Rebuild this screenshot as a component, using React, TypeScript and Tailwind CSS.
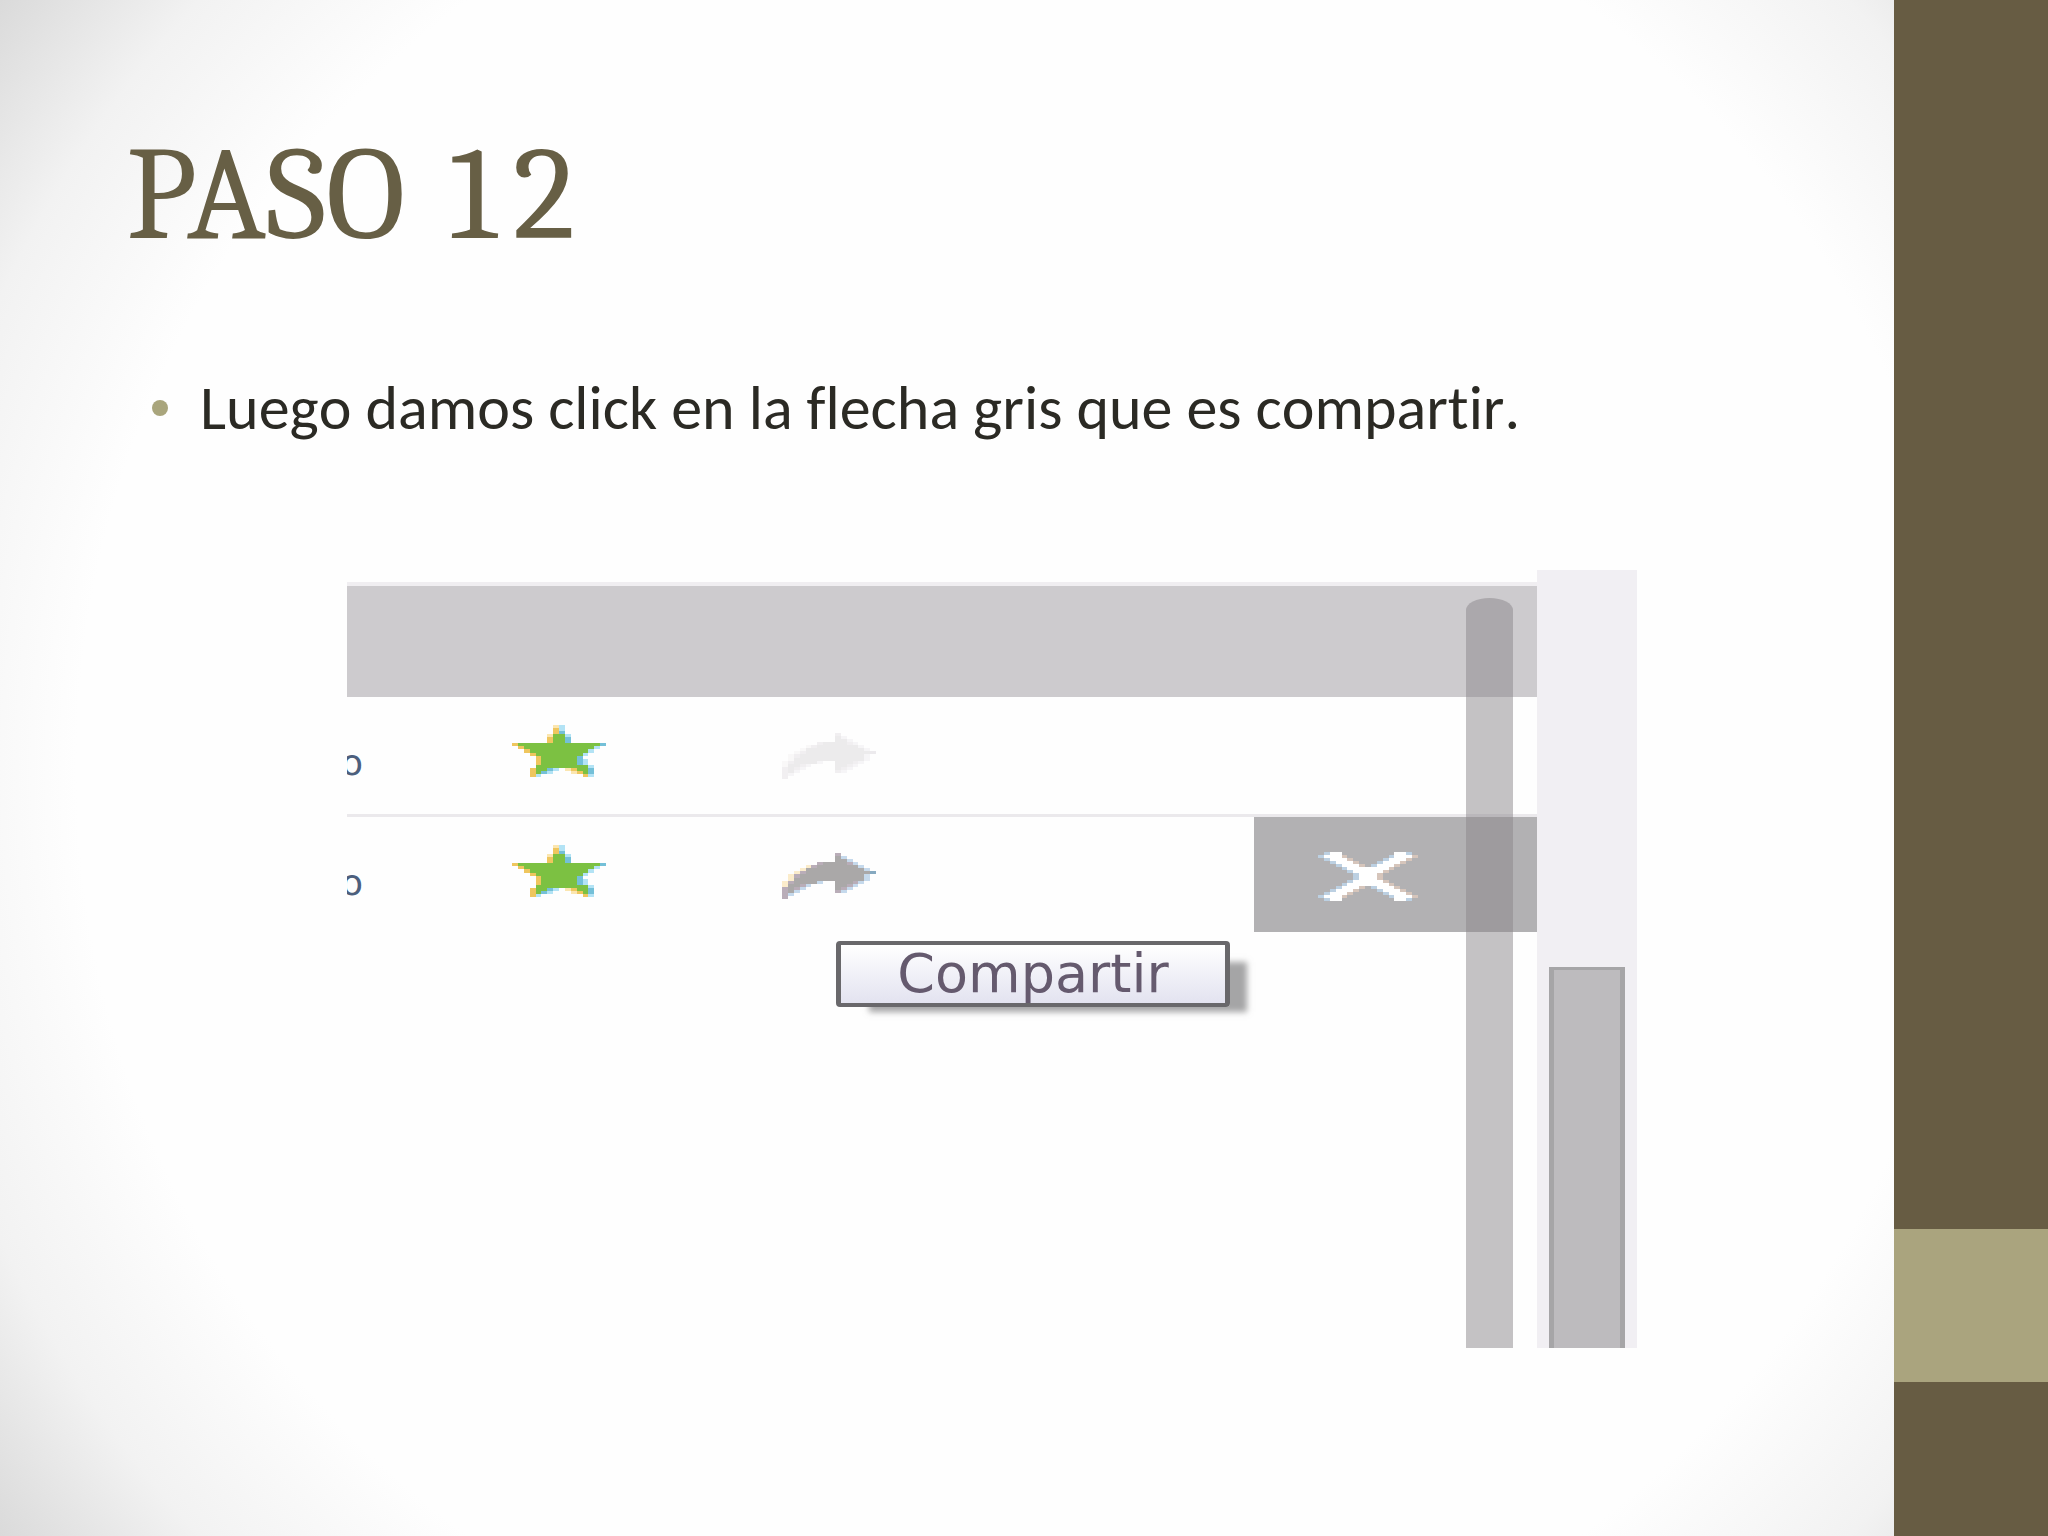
const STAR = [
  ".......ab.......",
  ".......yb.......",
  ".......yc.......",
  "......aggb......",
  "......yggc......",
  "......yggc......",
  "yggggggggggggggc",
  ".yggggggggggggb.",
  "..yggggggggggb..",
  "...yggggggggb...",
  "....yggggggc....",
  "....yggggggcb...",
  "....yggggggcb...",
  "....gggggggggb..",
  "...yggcb.ayggc..",
  "...ygcb...aygc..",
  "...yb.......yb..",
];

const ARROW = [
  ".........p......",
  ".........gb.....",
  ".........ggb....",
  "......pggggpb...",
  "....ypgggggggb..",
  "...yggggggggggb.",
  "..ypgggggggggggc",
  ".ypgggggggggggb.",
  ".yggggggggggggb.",
  "ypggggb..gggpb..",
  "yggpb....ggpb...",
  "pgpb.....gpb....",
  "pgb......pb.....",
  "pb..............",
  "p...............",
];

const CROSS = [
  ".bgg.........ggb.",
  "bgggy.......bgggy",
  ".bgggy.....bgggy.",
  "..bgggy...bgggy..",
  "...bgggy.bgggy...",
  "....bgggggggy....",
  ".....bgggggy.....",
  "......bgggy......",
  "......bgggy......",
  ".....bgggggy.....",
  "....bgggggggy....",
  "...bgggy.bgggy...",
  "..bgggy...bgggy..",
  ".bgggy.....bgggy.",
  "bgggy.......bgggy",
  ".bgg.........ggb.",
];

const green = { g: "#7cc142", y: "#efc65e", a: "#fbe6b0", b: "#b3e3f5", c: "#74c0d8" };
const grey = { g: "#aaa8a8", y: "#fbeccb", p: "#b9adb8", b: "#c5d9ec", c: "#86a9c0" };
const pale = { g: "#ecebec", y: "#f9f8f8", p: "#f1eff1", b: "#f6f5f7", c: "#eceaed" };
const white = { g: "#ffffff", y: "#d6c5bb", b: "#bcd0e2" };

type PixelIconProps = {
  rows: string[];
  colors: Record<string, string>;
  className: string;
};

function PixelIcon({ rows, colors, className }: PixelIconProps) {
  return (
    <svg
      viewBox={`0 0 ${rows[0].length} ${rows.length}`}
      preserveAspectRatio="none"
      shapeRendering="crispEdges"
      aria-hidden="true"
      className={className}
    >
      {rows.map((row, y) =>
        row.split("").map((key, x) =>
          colors[key] ? <rect key={`${x}-${y}`} x={x} y={y} width={1} height={1} fill={colors[key]} /> : null
        )
      )}
    </svg>
  );
}

function ItemActions({ shareColors }: { shareColors: Record<string, string> }) {
  return (
    <div className="flex items-start pt-7">
      {/* Tail of the cut-off file name */}
      <div className="w-4 h-14 overflow-hidden flex justify-end">
        <span className="font-['DejaVu_Sans'] text-[36px] leading-[76px] text-[#4d5f7d]">o</span>
      </div>
      <button aria-label="Favorito" className="ml-[149px]">
        <PixelIcon rows={STAR} colors={green} className="w-[94px] h-[52px]" />
      </button>
      <button aria-label="Compartir" className="ml-44 pt-2">
        <PixelIcon rows={ARROW} colors={shareColors} className="w-[94px] h-[46px]" />
      </button>
    </div>
  );
}

export default function App() {
  return (
    <div className="flex min-h-screen bg-[radial-gradient(circle_at_center,#fefefe_74%,#f2f2f2_88%,#dadada_100%)]">
      <main className="flex-1 min-w-0 pt-[115px]">
        {/* Title */}
        <h1 className="pl-[126px] font-[Cambria,'Liberation_Serif',serif] tabular-nums text-[132px] leading-[160px] text-[#675f45]">
          PASO 12
        </h1>

        <ul className="pt-[93px] pl-[152px]">
          <li className="flex items-center gap-8 font-[Calibri,Lato,sans-serif] [font-kerning:none] [font-variant-ligatures:none] text-[62px] leading-[80px] text-[#2b2a24]">
            <span className="w-4 h-4 rounded-full bg-[#a9a57c]" />
            Luego damos click en la flecha gris que es compartir.
          </li>
        </ul>

        {/* File list capture */}
        <figure className="relative flex mt-[122px] ml-[347px] mr-[257px] h-[778px]">
          <div className="relative flex-1 pt-3">
            <div className="h-[115px] border-t-4 border-[#f0eef1] bg-[#cdcbce]" />
            <div className="h-[120px] border-b-3 border-[#ebe9ec]">
              <ItemActions shareColors={pale} />
            </div>
            <div className="flex justify-between h-[115px]">
              <ItemActions shareColors={grey} />
              <button aria-label="Cerrar" className="w-[283px] pt-1 pl-16 bg-[#b2b1b3]">
                <PixelIcon rows={CROSS} colors={white} className="w-[100px] h-[49px]" />
              </button>
            </div>
            <div className="absolute top-7 bottom-0 right-6 w-[47px] rounded-t-[50%_12px] bg-[#898689]/50" />
          </div>

          {/* Outer scrollbar */}
          <div className="w-[100px] pt-[397px] px-3 bg-[#f1eff3]">
            <div className="h-full border-x-5 border-t-3 border-[#a6a5a7] bg-[#bdbbbe]" />
          </div>

          <div
            role="tooltip"
            className="absolute left-[489px] top-[371px] flex items-center justify-center w-[394px] h-[66px] rounded-sm border-x-5 border-y-4 border-[#69686b] bg-linear-to-b from-white to-[#e3e3f0] shadow-[25px_13px_6px_-8px_#8f8e90cc] font-['DejaVu_Sans'] text-[54px] leading-[54px] text-[#655a6e]"
          >
            Compartir
          </div>
        </figure>
      </main>

      {/* Slide edge */}
      <aside className="flex flex-col w-[7.5%] bg-[#675c43]">
        <div className="flex-8" />
        <div className="flex-1 bg-[#aaa47e]" />
        <div className="flex-1" />
      </aside>
    </div>
  );
}
